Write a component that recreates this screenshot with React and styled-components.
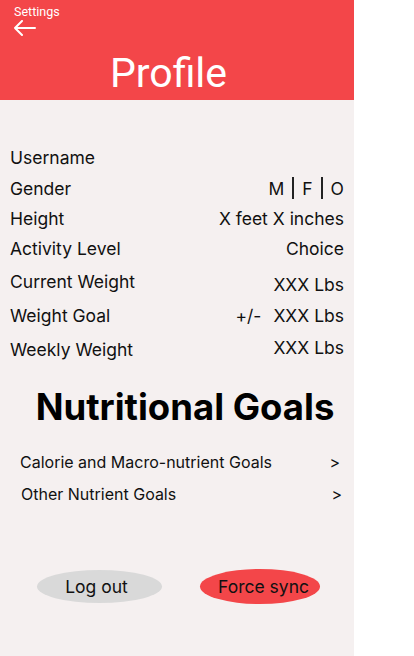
import styled, { createGlobalStyle } from 'styled-components';

const GlobalStyle = createGlobalStyle`
    html, body {
        margin: 0;
        padding: 0;
        background: #ffffff;
    }
    * {
        box-sizing: border-box;
    }
`;

const Screen = styled.div`
    width: 354px;
    height: 656px;
    background-color: #f5f0f0;
    display: flex;
    flex-direction: column;
    font-family: Inter, "Noto Sans", sans-serif;
    color: #111111;
`;

const Header = styled.header`
    height: 100px;
    background-color: #f34649;
    color: #ffffff;
    display: flex;
    flex-direction: column;
    padding: 4px 0 0 14px;
    font-family: Roboto, "Liberation Sans", sans-serif;
`;

const BackLink = styled.div`
    display: flex;
    flex-direction: column;
    gap: 1px;
    font-size: 12.5px;
    line-height: 15px;
`;

const Title = styled.h1`
    margin: 15px 0 0 0;
    padding-right: 31px;
    text-align: center;
    font-size: 41px;
    font-weight: 400;
    line-height: 44px;
`;

const Details = styled.section`
    display: flex;
    flex-direction: column;
    padding: 42px 10px 0 10px;
`;

const Row = styled.div`
    height: 30px;
    margin-top: ${({gap}) => gap || 0}px;
    display: flex;
    align-items: center;
    justify-content: space-between;
    font-size: 17.5px;
`;

const Value = styled.span`
    display: flex;
    align-items: center;
    gap: ${({spread}) => spread || 0}px;
    position: relative;
    top: ${({shift}) => shift || 0}px;
`;

const Divider = styled.span`
    display: inline-block;
    width: 2px;
    height: 22px;
    background-color: #222222;
    margin: 0 8px;
`;

const SectionTitle = styled.h2`
    margin: 21px 0 0 0;
    padding-left: 16px;
    text-align: center;
    font-size: 36.5px;
    font-weight: 700;
    line-height: 44px;
    color: #000000;
`;

const LinkList = styled.div`
    display: flex;
    flex-direction: column;
    padding: 17px 12px 0 20px;
`;

const LinkRow = styled.div`
    height: 32px;
    display: flex;
    align-items: center;
    justify-content: space-between;
    font-size: 16px;
    padding-left: ${({indent}) => indent || 0}px;
    padding-right: ${({trail}) => trail || 0}px;
`;

const Actions = styled.div`
    display: flex;
    align-items: center;
    gap: 38px;
    padding: 59px 0 0 37px;
`;

// nudge moves the label off-centre: positive to the right, negative to the left
const Pill = styled.button`
    border: none;
    border-radius: 50%;
    width: ${({w}) => w}px;
    height: ${({h}) => h}px;
    background-color: ${({danger}) => (danger ? '#f34649' : '#d9d9d9')};
    font-family: inherit;
    font-size: 17.5px;
    color: #111111;
    padding: 0 ${({nudge = 0}) => Math.max(-nudge, 0)}px 0 ${({nudge = 0}) => Math.max(nudge, 0)}px;
`;

function BackArrow() {
    return (
        <svg width="22" height="16" viewBox="0 0 22 16" fill="none">
            <path d="M1 8 H21 M8 1 L1 8 L8 15" stroke="#ffffff" strokeWidth="2" strokeLinecap="round" strokeLinejoin="round" />
        </svg>
    );
}

const details = [
    { label: 'Username', value: '', gap: 0 },
    { label: 'Gender', value: 'gender', gap: 1 },
    { label: 'Height', value: 'X feet X inches', gap: 0 },
    { label: 'Activity Level', value: 'Choice', gap: 0 },
    { label: 'Current Weight', value: 'XXX Lbs', gap: 3, shift: 3 },
    { label: 'Weight Goal', value: 'goal', gap: 4 },
    { label: 'Weekly Weight', value: 'XXX Lbs', gap: 4, shift: -2 },
];

function renderValue(item) {
    if (item.value === 'gender') {
        return (
            <Value>
                M<Divider />F<Divider />O
            </Value>
        );
    }
    if (item.value === 'goal') {
        return (
            <Value spread={12}>
                <span>+/-</span>
                <span>XXX Lbs</span>
            </Value>
        );
    }
    return <Value shift={item.shift}>{item.value}</Value>;
}

export default function App() {
    return (
        <>
            <GlobalStyle />
            <Screen>
                <Header>
                    <BackLink>
                        <span>Settings</span>
                        <BackArrow />
                    </BackLink>
                    <Title>Profile</Title>
                </Header>

                <Details>
                    {details.map((item) => (
                        <Row key={item.label} gap={item.gap}>
                            <span>{item.label}</span>
                            {renderValue(item)}
                        </Row>
                    ))}
                </Details>

                <SectionTitle>Nutritional Goals</SectionTitle>

                <LinkList>
                    <LinkRow trail={2}>
                        <span>Calorie and Macro-nutrient Goals</span>
                        <span>&gt;</span>
                    </LinkRow>
                    <LinkRow indent={1}>
                        <span>Other Nutrient Goals</span>
                        <span>&gt;</span>
                    </LinkRow>
                </LinkList>

                <Actions>
                    <Pill w={125} h={33} nudge={-6}>Log out</Pill>
                    <Pill danger w={120} h={35} nudge={7}>Force sync</Pill>
                </Actions>
            </Screen>
        </>
    );
}
